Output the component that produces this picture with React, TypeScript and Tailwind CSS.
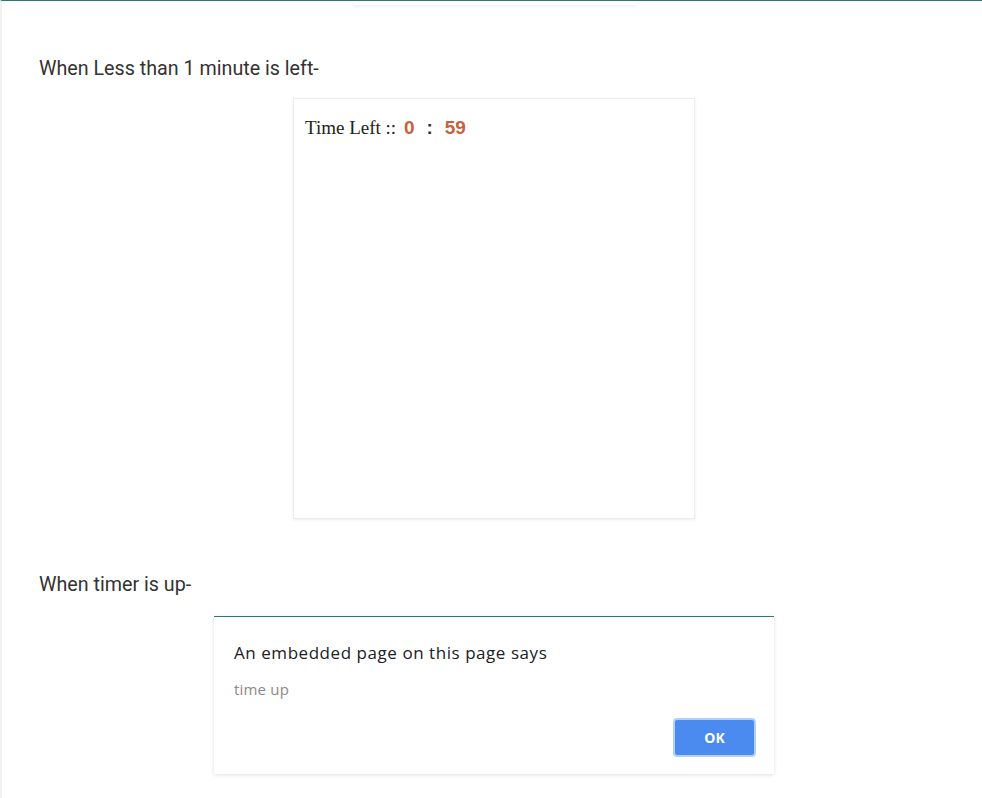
const App = () => {
  return (
    <div className="relative min-h-[798px] w-full bg-white border-t border-[#2b7a6b] border-l-2 border-l-[#f1f1f1] font-['Roboto',sans-serif] text-[#333]">
      <div className="absolute left-[350px] top-0 h-[4px] w-[286px] rounded-b-lg bg-white shadow-[0_2px_3px_rgba(0,0,0,0.06)]" />

      <div className="pl-[37px] pt-[54px]">
        <p className="text-[19.7px] leading-[28px]">When Less than 1 minute is left-</p>
      </div>

      <div className="flex justify-center pl-[4px] pt-[15px]">
        <div className="h-[421px] w-[402px] border border-[#ececec] bg-white px-[11px] pt-[16px] shadow-[0_1px_3px_rgba(0,0,0,0.07)]">
          <div className="flex items-baseline text-[19px] leading-[26px]">
            <span className="font-['Liberation_Serif',serif] text-[#222]">Time Left ::&nbsp;</span>
            <span className="ml-[3px] font-['Liberation_Sans',sans-serif] font-bold text-[#c8613c]">0</span>
            <span className="mx-[12px] font-['Liberation_Sans',sans-serif] font-bold text-[#333]">:</span>
            <span className="font-['Liberation_Sans',sans-serif] font-bold text-[#c8613c]">59</span>
          </div>
        </div>
      </div>

      <div className="pl-[37px] pt-[52px]">
        <p className="text-[19.7px] leading-[28px]">When timer is up-</p>
      </div>

      <div className="flex justify-center pl-[4px] pt-[17px]">
        <div className="h-[158px] w-[560px] border-t border-t-[#2b7a6b] bg-white px-[20px] pt-[24px] shadow-[0_1px_4px_rgba(0,0,0,0.12)]">
          <p className="font-['Open_Sans',sans-serif] text-[17px] leading-[24px] tracking-[0.55px] text-[#202124]">An embedded page on this page says</p>
          <p className="mt-[14px] font-['Open_Sans',sans-serif] text-[15px] leading-[20px] tracking-[0.2px] text-[#8a8a8a]">time up</p>
          <div className="mt-[19px] flex justify-end">
            <button className="mr-[-2px] h-[39px] w-[83px] rounded-[4px] border-2 border-[#b5d0f5] bg-[#4b8bf0] font-['Open_Sans',sans-serif] text-[14px] font-bold text-white">
              OK
            </button>
          </div>
        </div>
      </div>
    </div>
  );
};

export default App;
